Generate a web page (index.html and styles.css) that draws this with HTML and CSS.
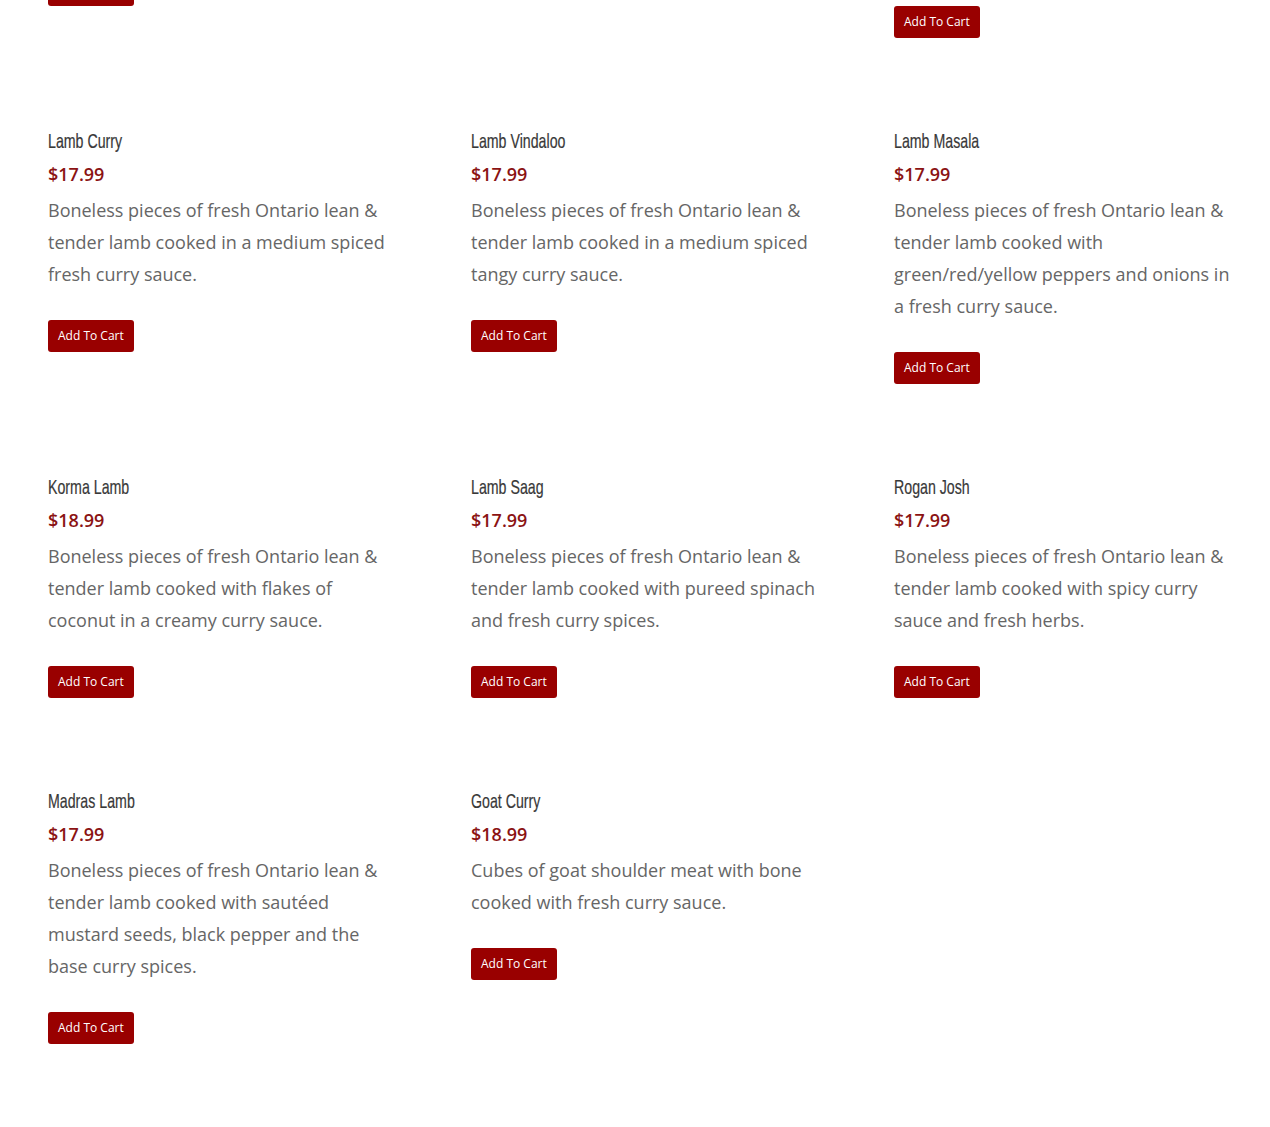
FILE: index.html
```html
<!DOCTYPE html>
<html lang="en">
<head>
<meta charset="utf-8">
<title>Lamb Dishes</title>
<link rel="stylesheet" href="styles.css">
</head>
<body>
<main class="menu">
  <div class="item">
    <h3 class="title">Chicken Madras</h3>
    <div class="price">$16.99</div>
    <p class="desc">Boneless pieces of chicken cooked with sautéed mustard seeds, black pepper and curry spices.</p>
    <button class="cart">Add To Cart</button>
  </div>
  <div class="item">
    <h3 class="title">Chicken Saag</h3>
    <div class="price">$16.99</div>
    <p class="desc">Boneless chicken cooked with pureed spinach.</p>
    <button class="cart">Add To Cart</button>
  </div>
  <div class="item">
    <h3 class="title">Chicken Masala</h3>
    <div class="price">$16.99</div>
    <p class="desc">Boneless pieces of fresh Ontario lean &amp; tender chicken cooked with green/red/yellow peppers and onions in a fresh curry sauce.</p>
    <button class="cart">Add To Cart</button>
  </div>

  <div class="item">
    <h3 class="title">Lamb Curry</h3>
    <div class="price">$17.99</div>
    <p class="desc">Boneless pieces of fresh Ontario lean &amp; tender lamb cooked in a medium spiced fresh curry sauce.</p>
    <button class="cart">Add To Cart</button>
  </div>
  <div class="item">
    <h3 class="title">Lamb Vindaloo</h3>
    <div class="price">$17.99</div>
    <p class="desc">Boneless pieces of fresh Ontario lean &amp; tender lamb cooked in a medium spiced tangy curry sauce.</p>
    <button class="cart">Add To Cart</button>
  </div>
  <div class="item">
    <h3 class="title">Lamb Masala</h3>
    <div class="price">$17.99</div>
    <p class="desc">Boneless pieces of fresh Ontario lean &amp; tender lamb cooked with green/red/yellow peppers and onions in a fresh curry sauce.</p>
    <button class="cart">Add To Cart</button>
  </div>

  <div class="item">
    <h3 class="title">Korma Lamb</h3>
    <div class="price">$18.99</div>
    <p class="desc">Boneless pieces of fresh Ontario lean &amp; tender lamb cooked with flakes of coconut in a creamy curry sauce.</p>
    <button class="cart">Add To Cart</button>
  </div>
  <div class="item">
    <h3 class="title">Lamb Saag</h3>
    <div class="price">$17.99</div>
    <p class="desc">Boneless pieces of fresh Ontario lean &amp; tender lamb cooked with pureed spinach and fresh curry spices.</p>
    <button class="cart">Add To Cart</button>
  </div>
  <div class="item">
    <h3 class="title">Rogan Josh</h3>
    <div class="price">$17.99</div>
    <p class="desc">Boneless pieces of fresh Ontario lean &amp; tender lamb cooked with spicy curry sauce and fresh herbs.</p>
    <button class="cart">Add To Cart</button>
  </div>

  <div class="item">
    <h3 class="title">Madras Lamb</h3>
    <div class="price">$17.99</div>
    <p class="desc">Boneless pieces of fresh Ontario lean &amp; tender lamb cooked with sautéed mustard seeds, black pepper and the base curry spices.</p>
    <button class="cart">Add To Cart</button>
  </div>
  <div class="item">
    <h3 class="title">Goat Curry</h3>
    <div class="price">$18.99</div>
    <p class="desc">Cubes of goat shoulder meat with bone cooked with fresh curry sauce.</p>
    <button class="cart">Add To Cart</button>
  </div>
</main>
</body>
</html>
```

FILE: styles.css
```css
html, body {
  margin: 0;
  padding: 0;
  background: #ffffff;
}

body {
  font-family: "Open Sans", "Liberation Sans", sans-serif;
  overflow: hidden;
}

.menu {
  display: grid;
  grid-template-columns: 346px 346px 346px;
  column-gap: 77px;
  row-gap: 91px;
  align-items: start;
  padding: 0 30px 0 48px;
  margin-top: -217px;
}

.item {
  display: flex;
  flex-direction: column;
  align-items: flex-start;
}

.title {
  margin: 0;
  font-family: "Liberation Sans", Arial, sans-serif;
  font-weight: 400;
  font-size: 21px;
  line-height: 24px;
  color: #383838;
  transform: scaleX(0.676);
  transform-origin: left center;
  white-space: nowrap;
  -webkit-text-stroke: 0.2px #383838;
}

.price {
  margin-top: 9px;
  font-size: 18px;
  line-height: 24px;
  font-weight: 600;
  color: #8b1313;
}

.desc {
  margin: 8px 0 0;
  font-size: 18px;
  line-height: 32px;
  color: #666666;
}

.cart {
  margin-top: 30px;
  height: 32px;
  padding: 0 10px;
  border: none;
  border-radius: 3px;
  background: #990000;
  color: #ffffff;
  font-family: "Open Sans", "Liberation Sans", sans-serif;
  font-size: 12px;
  line-height: 32px;
  cursor: pointer;
}
```
